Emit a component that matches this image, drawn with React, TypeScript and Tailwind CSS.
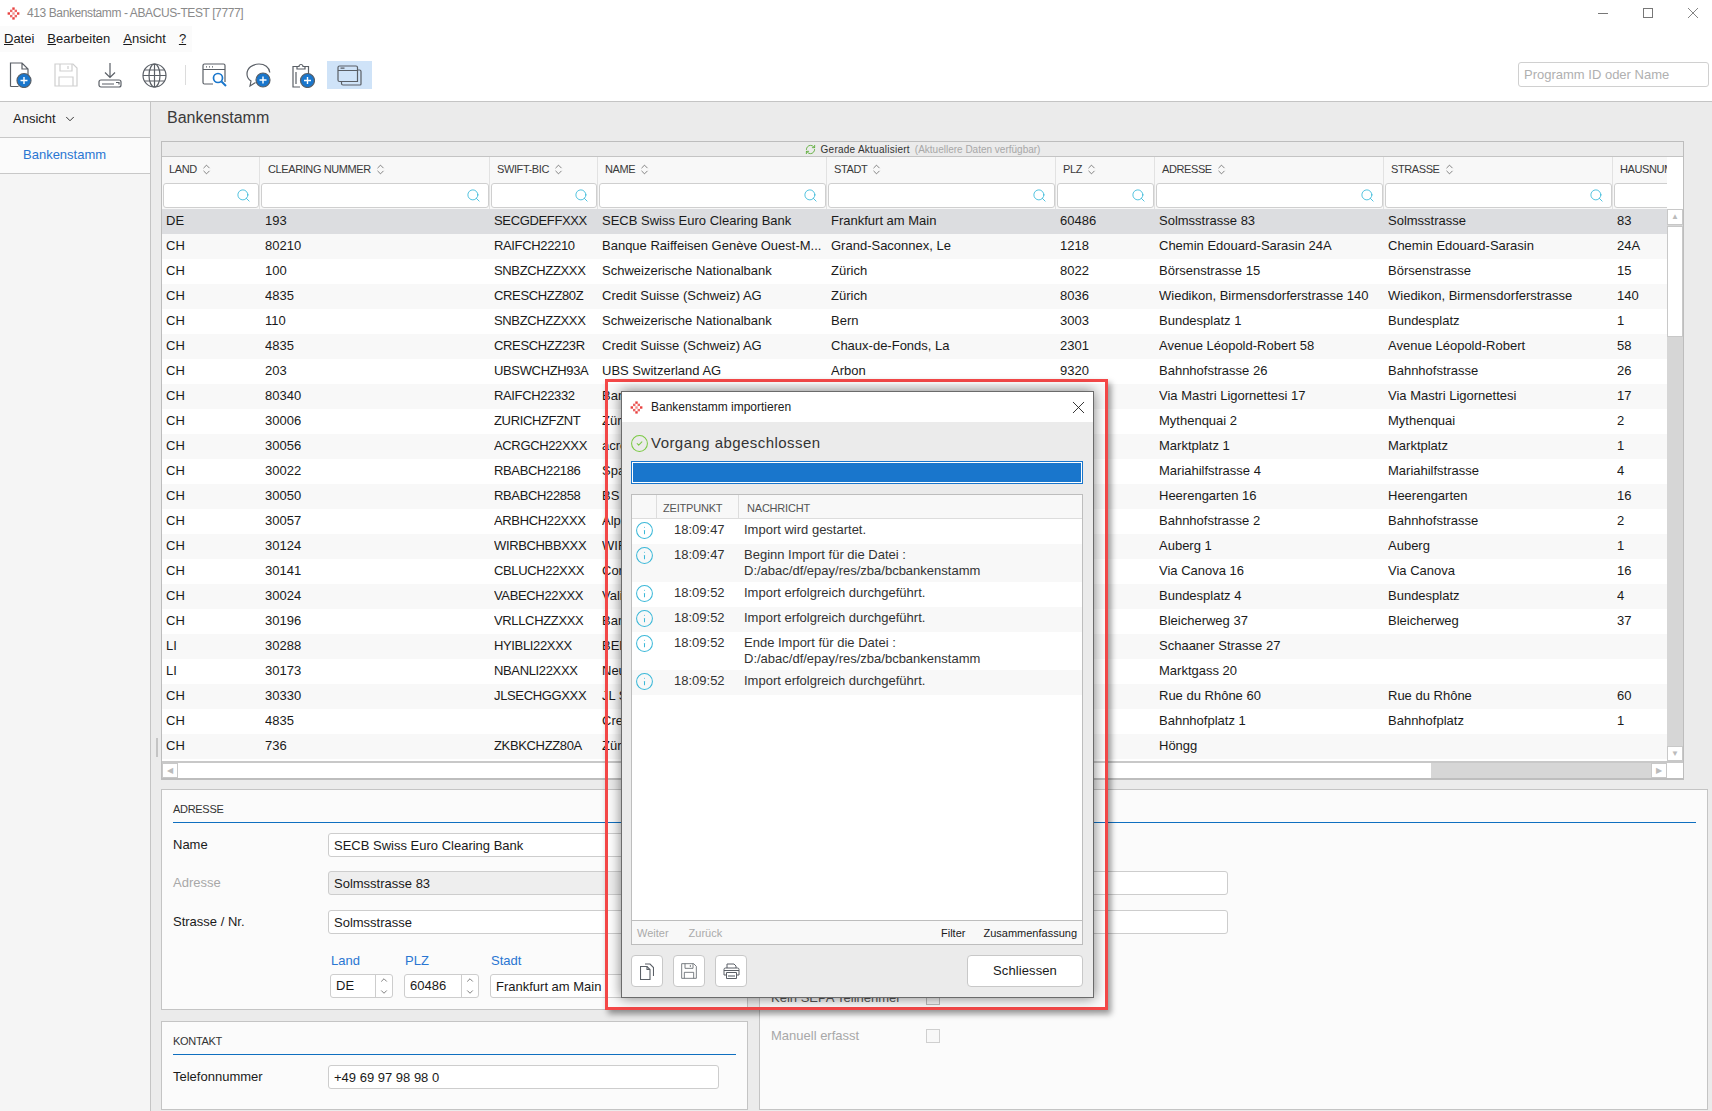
import type { ReactNode } from "react";
import {
  CircleCheck,
  ChevronDown,
  ChevronUp,
  ChevronsUpDown,
  Info,
  RefreshCw,
  Search,
  X,
} from "lucide-react";

// land, clearing, swift, name, stadt, plz, adresse, strasse, nr
const banks = [
  ["DE", "193", "SECGDEFFXXX", "SECB Swiss Euro Clearing Bank", "Frankfurt am Main", "60486", "Solmsstrasse 83", "Solmsstrasse", "83"],
  ["CH", "80210", "RAIFCH22210", "Banque Raiffeisen Genève Ouest-M...", "Grand-Saconnex, Le", "1218", "Chemin Edouard-Sarasin 24A", "Chemin Edouard-Sarasin", "24A"],
  ["CH", "100", "SNBZCHZZXXX", "Schweizerische Nationalbank", "Zürich", "8022", "Börsenstrasse 15", "Börsenstrasse", "15"],
  ["CH", "4835", "CRESCHZZ80Z", "Credit Suisse (Schweiz) AG", "Zürich", "8036", "Wiedikon, Birmensdorferstrasse 140", "Wiedikon, Birmensdorferstrasse", "140"],
  ["CH", "110", "SNBZCHZZXXX", "Schweizerische Nationalbank", "Bern", "3003", "Bundesplatz 1", "Bundesplatz", "1"],
  ["CH", "4835", "CRESCHZZ23R", "Credit Suisse (Schweiz) AG", "Chaux-de-Fonds, La", "2301", "Avenue Léopold-Robert 58", "Avenue Léopold-Robert", "58"],
  ["CH", "203", "UBSWCHZH93A", "UBS Switzerland AG", "Arbon", "9320", "Bahnhofstrasse 26", "Bahnhofstrasse", "26"],
  ["CH", "80340", "RAIFCH22332", "Banca Raiffeisen del Monte San Giorgio", "Ligornetto", "6853", "Via Mastri Ligornettesi 17", "Via Mastri Ligornettesi", "17"],
  ["CH", "30006", "ZURICHZFZNT", "Zürcher Kantonalbank", "", "", "Mythenquai 2", "Mythenquai", "2"],
  ["CH", "30056", "ACRGCH22XXX", "acrevis Bank AG", "", "", "Marktplatz 1", "Marktplatz", "1"],
  ["CH", "30022", "RBABCH22186", "Sparkasse", "", "", "Mariahilfstrasse 4", "Mariahilfstrasse", "4"],
  ["CH", "30050", "RBABCH22858", "BS Bank", "", "", "Heerengarten 16", "Heerengarten", "16"],
  ["CH", "30057", "ARBHCH22XXX", "Alpha Rheintal Bank", "", "", "Bahnhofstrasse 2", "Bahnhofstrasse", "2"],
  ["CH", "30124", "WIRBCHBBXXX", "WIR Bank", "", "", "Auberg 1", "Auberg", "1"],
  ["CH", "30141", "CBLUCH22XXX", "Cornèr Bank", "", "", "Via Canova 16", "Via Canova", "16"],
  ["CH", "30024", "VABECH22XXX", "Valiant Bank", "", "", "Bundesplatz 4", "Bundesplatz", "4"],
  ["CH", "30196", "VRLLCHZZXXX", "Bank Vontobel", "", "", "Bleicherweg 37", "Bleicherweg", "37"],
  ["LI", "30288", "HYIBLI22XXX", "BENDURA", "", "", "Schaaner Strasse 27", "", ""],
  ["LI", "30173", "NBANLI22XXX", "Neue Bank", "", "", "Marktgass 20", "", ""],
  ["CH", "30330", "JLSECHGGXXX", "JL Securities", "", "", "Rue du Rhône 60", "Rue du Rhône", "60"],
  ["CH", "4835", "", "Credit Suisse", "", "", "Bahnhofplatz 1", "Bahnhofplatz", "1"],
  ["CH", "736", "ZKBKCHZZ80A", "Zürcher Kantonalbank", "", "", "Höngg", "", ""],
];

const columns = [
  { label: "LAND", w: "w-[98px]" },
  { label: "CLEARING NUMMER", w: "w-[230px]" },
  { label: "SWIFT-BIC", w: "w-[108px]" },
  { label: "NAME", w: "w-[229px]" },
  { label: "STADT", w: "w-[229px]" },
  { label: "PLZ", w: "w-[99px]" },
  { label: "ADRESSE", w: "w-[229px]" },
  { label: "STRASSE", w: "w-[229px]" },
  { label: "HAUSNUMMER", w: "w-[90px]" },
];

const logRows = [
  { time: "18:09:47", text: ["Import wird gestartet."] },
  { time: "18:09:47", text: ["Beginn Import für die Datei :", "D:/abac/df/epay/res/zba/bcbankenstamm"] },
  { time: "18:09:52", text: ["Import erfolgreich durchgeführt."] },
  { time: "18:09:52", text: ["Import erfolgreich durchgeführt."] },
  { time: "18:09:52", text: ["Ende Import für die Datei :", "D:/abac/df/epay/res/zba/bcbankenstamm"] },
  { time: "18:09:52", text: ["Import erfolgreich durchgeführt."] },
];

function Logo() {
  return (
    <svg width="13" height="13" viewBox="0 0 13 13" fill="#e8413f">
      <rect x="5.3" y="0.4" width="2.4" height="2.4" />
      <rect x="3" y="2.7" width="2.4" height="2.4" opacity="0.8" />
      <rect x="7.6" y="2.7" width="2.4" height="2.4" opacity="0.8" />
      <rect x="0.6" y="5.3" width="2.4" height="2.4" />
      <rect x="10" y="5.3" width="2.4" height="2.4" />
      <rect x="5.3" y="5.3" width="2.4" height="2.4" opacity="0.6" />
      <rect x="3" y="7.9" width="2.4" height="2.4" opacity="0.8" />
      <rect x="7.6" y="7.9" width="2.4" height="2.4" opacity="0.8" />
      <rect x="5.3" y="10.2" width="2.4" height="2.4" />
    </svg>
  );
}

function PlusBadge({ cx, cy }: { cx: number; cy: number }) {
  return (
    <g>
      <circle cx={cx} cy={cy} r="7" fill="#1976cc" />
      <path d={`M${cx - 3.5} ${cy}h7M${cx} ${cy - 3.5}v7`} stroke="#fff" strokeWidth="1.4" fill="none" />
    </g>
  );
}

function DocPlusIcon() {
  return (
    <svg width="24" height="26" viewBox="0 0 24 26" fill="none" stroke="#5a5f66" strokeWidth="1.2">
      <path d="M1.5 24.5V1h11.5l6 6v10M13 1v6h6M1.5 24.5h8" />
      <PlusBadge cx={15} cy={18.5} />
    </svg>
  );
}

function SaveIcon({ color, size = 24 }: { color: string; size?: number }) {
  return (
    <svg width={size} height={size} viewBox="0 0 24 24" fill="none" stroke={color} strokeWidth="1.2">
      <path d="M1 1h18l4 4v18H1z" />
      <path d="M6 1v7h12V1M14 3v3M5 23v-9h14v9" />
    </svg>
  );
}

function DownloadIcon() {
  return (
    <svg width="24" height="26" viewBox="0 0 24 26" fill="none" stroke="#5a5f66" strokeWidth="1.2">
      <path d="M12 1v14M7 10.5l5 5 5-5" />
      <path d="M3 18h18a2 2 0 0 1 2 2v3a2 2 0 0 1-2 2H3a2 2 0 0 1-2-2v-3a2 2 0 0 1 2-2z" />
      <path d="M4 22h12M18 20.5h3v2" />
    </svg>
  );
}

function GlobeIcon() {
  return (
    <svg width="25" height="25" viewBox="0 0 25 25" fill="none" stroke="#5a5f66" strokeWidth="1.2">
      <circle cx="12.5" cy="12.5" r="11.5" />
      <ellipse cx="12.5" cy="12.5" rx="5.5" ry="11.5" />
      <path d="M12.5 1v23M1 12.5h23M2.6 7h19.8M2.6 18h19.8" />
    </svg>
  );
}

function WindowSearchIcon() {
  return (
    <svg width="25" height="25" viewBox="0 0 25 25" fill="none" stroke="#5a5f66" strokeWidth="1.2">
      <path d="M11 21H2.5A1.5 1.5 0 0 1 1 19.5v-17A1.5 1.5 0 0 1 2.5 1h19A1.5 1.5 0 0 1 23 2.5V19" />
      <path d="M1 6.5h22M4 3.8h1M7 3.8h1M10 3.8h1" />
      <circle cx="16" cy="15" r="4.5" stroke="#1976cc" strokeWidth="1.7" />
      <path d="M19.5 18.5l4.5 4.5" stroke="#1976cc" strokeWidth="2" />
    </svg>
  );
}

function ChatPlusIcon() {
  return (
    <svg width="25" height="25" viewBox="0 0 25 25" fill="none" stroke="#5a5f66" strokeWidth="1.2">
      <path d="M13 1C6.4 1 1 5.2 1 11c0 3 1.5 5.4 4 7l-1 5 5.5-3.5" />
      <path d="M13 1c5.7 0 10.2 3.4 10.8 8.5" />
      <PlusBadge cx={17} cy={17} />
    </svg>
  );
}

function ClipboardPlusIcon() {
  return (
    <svg width="23" height="25" viewBox="0 0 23 25" fill="none" stroke="#5a5f66" strokeWidth="1.2">
      <path d="M8 24H1V3.5h4M13 3.5h3.5V11" />
      <path d="M5 6h8V3.5h-2a2 2 0 0 0-4 0H5z" />
      <path d="M4 9v12" />
      <PlusBadge cx={15.5} cy={17.5} />
    </svg>
  );
}

function WindowsIcon() {
  return (
    <svg width="25" height="21" viewBox="0 0 25 21" fill="none" stroke="#5a5f66" strokeWidth="1.2">
      <path d="M20.5 16.5H2.5A1.5 1.5 0 0 1 1 15V2.5A1.5 1.5 0 0 1 2.5 1h16.5a1.5 1.5 0 0 1 1.5 1.5z" />
      <path d="M1 5.5h19.5M3.5 3.2h4" />
      <path d="M20.5 5h2A1.5 1.5 0 0 1 24 6.5v12.5a1 1 0 0 1-1 1H6a1.5 1.5 0 0 1-1.5-1.5v-2" />
    </svg>
  );
}

function CopyIcon() {
  return (
    <svg width="14" height="17" viewBox="0 0 14 17" fill="none" stroke="#5a5f66" strokeWidth="1.1">
      <path d="M5 1h5l3.5 3.5V13" />
      <path d="M.5 3.5H7L10 6.5V16.5H.5z" fill="#fff" />
      <path d="M7 3.5v3h3" />
    </svg>
  );
}

function PrintIcon() {
  return (
    <svg width="17" height="16" viewBox="0 0 17 16" fill="none" stroke="#5a5f66" strokeWidth="1">
      <path d="M4 5V1h7l2 2v2" />
      <path d="M3.5 12H1V6.5A1.5 1.5 0 0 1 2.5 5h12A1.5 1.5 0 0 1 16 6.5V12h-2.5" />
      <path d="M1 7.5h15" />
      <path d="M3.5 9.5h10v6h-10z" />
      <path d="M5 12h7v2H5z" fill="#a5a9ae" stroke="none" />
    </svg>
  );
}

function ToolButton({ children }: { children: ReactNode }) {
  return <div className="flex h-[28px] w-[44.5px] shrink-0 items-center justify-center">{children}</div>;
}

function Field({ value, className }: { value?: string; className: string }) {
  return (
    <input
      readOnly
      defaultValue={value}
      className={`h-[24px] rounded-[3px] border border-[#cdcdcd] pl-[5px] text-[13px] text-[#1a1a1a] outline-none ${className}`}
    />
  );
}

function Spin({ value, className }: { value: string; className: string }) {
  return (
    <div className={`flex h-[24px] rounded-[3px] border border-[#cdcdcd] bg-white text-[13px] text-[#1a1a1a] ${className}`}>
      <div className="flex flex-1 items-center pl-[5px]">{value}</div>
      <div className="flex w-[17px] flex-col items-center justify-center gap-[2px] border-l border-[#cdcdcd] text-[#666]">
        <ChevronUp size={10} />
        <ChevronDown size={10} />
      </div>
    </div>
  );
}

function CardTitle({ title }: { title?: string }) {
  return (
    <div className="flex h-[33px] items-center border-b border-[#0f6fc0] pt-[6px] text-[11px] tracking-[-0.3px] text-[#333]">
      {title}
    </div>
  );
}

function Sort() {
  return <ChevronsUpDown size={13} strokeWidth={1.2} className="ml-[3px] shrink-0 text-[#444]" />;
}

function ScrollBtn({ children, className }: { children: ReactNode; className?: string }) {
  return (
    <div className={`flex items-center justify-center border border-[#c8c8c8] bg-white text-[8px] text-[#bbb] ${className ?? ""}`}>
      {children}
    </div>
  );
}

export default function App() {
  return (
    <div className="relative flex h-screen w-full flex-col overflow-hidden bg-white font-['Liberation_Sans',sans-serif] text-[13px] text-[#1a1a1a]">
      {/* title bar */}
      <div className="flex h-[26px] items-center pr-[14px] pl-[7px]">
        <Logo />
        <span className="ml-[7px] text-[12px] tracking-[-0.4px] text-[#8a8a8a]">413 Bankenstamm - ABACUS-TEST [7777]</span>
        <div className="ml-auto flex items-center gap-[35px]">
          <div className="h-px w-[10px] bg-[#777]" />
          <div className="h-[10px] w-[10px] border border-[#777]" />
          <svg width="10" height="10" viewBox="0 0 10 10" stroke="#777" strokeWidth="0.9">
            <path d="M0 0l10 10M10 0L0 10" />
          </svg>
        </div>
      </div>

      {/* menu */}
      <div className="flex h-[26px] w-[192px] items-center gap-[13px] bg-[#fbfbfb] pl-[4px]">
        <span><u>D</u>atei</span>
        <span><u>B</u>earbeiten</span>
        <span><u>A</u>nsicht</span>
        <span><u>?</u></span>
      </div>

      {/* toolbar */}
      <div className="-ml-[1px] flex h-[49px] items-start pt-[9px] pr-[3px]">
        <ToolButton><DocPlusIcon /></ToolButton>
        <ToolButton><SaveIcon color="#cfcfcf" /></ToolButton>
        <ToolButton><DownloadIcon /></ToolButton>
        <ToolButton><GlobeIcon /></ToolButton>
        <div className="mt-[4px] ml-[8px] h-[20px] w-px bg-[#dcdcdc]" />
        <div className="ml-[6px] flex">
          <ToolButton><WindowSearchIcon /></ToolButton>
          <ToolButton><ChatPlusIcon /></ToolButton>
          <ToolButton><ClipboardPlusIcon /></ToolButton>
        </div>
        <div className="ml-[1.5px] flex h-[28px] w-[45px] items-center justify-center bg-[#cfe3f8]">
          <WindowsIcon />
        </div>
        <input
          readOnly
          placeholder="Programm ID oder Name"
          className="mt-[1px] ml-auto h-[25px] w-[191px] rounded-[3px] border border-[#d0d0d0] pl-[5px] text-[13px] outline-none placeholder:text-[#b0b0b0]"
        />
      </div>

      <div className="relative flex flex-1 border-t border-[#c4c4c4] bg-[#ebebeb]">
        {/* sidebar */}
        <div className="flex w-[151px] shrink-0 flex-col border-r border-[#c4c4c4] bg-[#f5f5f5]">
          <div className="flex h-[36px] items-center gap-[7px] border-b border-[#c8c8c8] pb-[1px] pl-[13px]">
            Ansicht
            <ChevronDown size={14} strokeWidth={1.5} />
          </div>
          <div className="flex h-[36px] items-center border-b border-[#c8c8c8] bg-[#fbfbfb] pb-[1px] pl-[23px] text-[#2a76d2]">
            Bankenstamm
          </div>
        </div>

        {/* splitter grip */}
        <div className="absolute top-[636px] left-[156px] h-[19px] w-[2px] bg-[#c4c4c4]" />

        <div className="flex flex-1 flex-col pr-[4px] pl-[10px]">
          <div className="flex h-[30px] items-center pt-[2px] pl-[6px] text-[16px] text-[#3a3a3a]">Bankenstamm</div>

          {/* table */}
          <div className="mt-[9px] mr-[24px] flex h-[639px] flex-col border border-b-2 border-[#bdbdbd] bg-white">
            <div className="flex h-[15px] items-center justify-center gap-[5px] border-b border-[#c4c4c4] bg-[#ebebeb] text-[10px]">
              <RefreshCw size={11} strokeWidth={2} className="text-[#5fae3c]" />
              <span className="tracking-[0.25px] text-[#333]">Gerade Aktualisiert</span>
              <span className="text-[#a8a8a8]">(Aktuellere Daten verfügbar)</span>
            </div>

            <div className="flex h-[605px]">
              <div className="flex w-[1505px] flex-col overflow-hidden">
                <div className="flex h-[52px] shrink-0 bg-[#f8f8f8]">
                  {columns.map((c, i) => (
                    <div key={c.label} className={`flex shrink-0 flex-col ${c.w} ${i < 8 ? "border-r border-[#e2e2e2]" : ""}`}>
                      <div className={`flex h-[24px] items-center overflow-hidden pt-[1px] text-[11px] tracking-[-0.4px] whitespace-nowrap text-[#3a3a3a] ${i === 1 ? "pl-[8px]" : "pl-[7px]"}`}>
                        {c.label}
                        {i < 8 && <Sort />}
                      </div>
                      <div className="mt-[2px] ml-[1px] flex h-[24.5px] items-center justify-end rounded-[3px] border border-[#cfcfcf] bg-white pr-[7px] text-[#2bb5d8]">
                        {i < 8 && <Search size={15} strokeWidth={1.3} />}
                      </div>
                    </div>
                  ))}
                </div>

                {banks.map((r, i) => (
                  <div
                    key={i}
                    className={`grid h-[25px] shrink-0 grid-cols-[99px_229px_108px_229px_229px_99px_229px_229px_50px] items-center pb-[2px] pl-[4px] whitespace-nowrap ${
                      i === 0 ? "bg-[#dcdde0]" : i % 2 === 1 ? "bg-[#f8f8f8]" : "bg-white"
                    }`}
                  >
                    {r.map((v, j) => (
                      <div key={j} className={`overflow-hidden ${j === 2 ? "tracking-[-0.35px]" : ""}`}>{v}</div>
                    ))}
                  </div>
                ))}
              </div>

              {/* vertical scrollbar */}
              <div className="flex w-[16px] flex-col">
                <div className="h-[52px] bg-white" />
                <div className="flex flex-1 flex-col bg-[#d6d6d6]">
                  <ScrollBtn className="h-[16px]">▲</ScrollBtn>
                  <div className="mt-[1px] h-[111px] border border-[#c8c8c8] bg-white" />
                  <ScrollBtn className="mt-auto h-[15px]">▼</ScrollBtn>
                </div>
              </div>
            </div>

            {/* horizontal scrollbar */}
            <div className="flex h-[17px] border-t-2 border-[#c8c8c8]">
              <ScrollBtn className="w-[16px]">◀</ScrollBtn>
              <div className="w-[1253px] bg-white" />
              <div className="w-[220px] bg-[#d6d6d6]" />
              <ScrollBtn className="w-[16px]">▶</ScrollBtn>
              <div className="flex-1 bg-white" />
            </div>
          </div>

          {/* detail panels */}
          <div className="mt-[9px] flex h-[321px] gap-[11px]">
            <div className="flex w-[587px] shrink-0 flex-col gap-[11px]">
              <div className="h-[221px] border border-[#c4c4c4] bg-[#fbfbfb] px-[11px]">
                <CardTitle title="ADRESSE" />
                <div className="mt-[10px] flex items-center">
                  <span className="w-[155px]">Name</span>
                  <Field value="SECB Swiss Euro Clearing Bank" className="flex-1 bg-white" />
                </div>
                <div className="mt-[14px] flex items-center">
                  <span className="w-[155px] text-[#a8a8a8]">Adresse</span>
                  <Field value="Solmsstrasse 83" className="flex-1 bg-[#eeeeee]" />
                </div>
                <div className="mt-[15px] flex items-center">
                  <span className="w-[155px]">Strasse / Nr.</span>
                  <Field value="Solmsstrasse" className="flex-1 bg-white" />
                </div>
                <div className="mt-[19px] ml-[157px] flex gap-[11px]">
                  <div className="flex flex-col">
                    <span className="h-[16px] pl-[1px] leading-[16px] text-[#2a76d2]">Land</span>
                    <Spin value="DE" className="mt-[5px] w-[63px]" />
                  </div>
                  <div className="flex flex-col">
                    <span className="h-[16px] pl-[1px] leading-[16px] text-[#2a76d2]">PLZ</span>
                    <Spin value="60486" className="mt-[5px] w-[75px]" />
                  </div>
                  <div className="flex flex-1 flex-col">
                    <span className="h-[16px] pl-[1px] leading-[16px] text-[#2a76d2]">Stadt</span>
                    <Field value="Frankfurt am Main" className="mt-[5px] w-full bg-white" />
                  </div>
                </div>
              </div>

              <div className="h-[89px] border border-[#c4c4c4] bg-[#fbfbfb] px-[11px]">
                <CardTitle title="KONTAKT" />
                <div className="mt-[10px] flex items-center">
                  <span className="w-[155px]">Telefonnummer</span>
                  <Field value="+49 69 97 98 98 0" className="w-[391px] bg-white" />
                </div>
              </div>
            </div>

            <div className="flex-1 border border-[#c4c4c4] bg-[#fbfbfb] px-[11px]">
              <CardTitle />
              <div className="mt-[48px] ml-[155px]">
                <Field className="block w-[302px] bg-white" />
              </div>
              <div className="mt-[15px] ml-[155px]">
                <Field className="block w-[302px] bg-white" />
              </div>
              <div className="mt-[57px] flex h-[14px] items-center text-[#555]">
                <span className="w-[155px]">Kein SEPA Teilnehmer</span>
                <span className="h-[14px] w-[14px] border border-[#bbb] bg-[#f5f5f5]" />
              </div>
              <div className="mt-[24px] flex h-[14px] items-center text-[#a8a8a8]">
                <span className="w-[155px]">Manuell erfasst</span>
                <span className="h-[14px] w-[14px] border border-[#cfcfcf] bg-[#f8f8f8]" />
              </div>
            </div>
          </div>
        </div>
      </div>

      {/* red annotation frame */}
      <div className="absolute top-[379px] left-[605px] h-[631px] w-[503px] border-[3px] border-[#f44848] shadow-[3px_4px_6px_rgba(0,0,0,0.4)]" />

      {/* dialog */}
      <div className="absolute top-[391px] left-[621px] flex h-[607px] w-[473px] flex-col border border-[#6b6b6b] bg-[#ebebeb] shadow-[0_0_12px_rgba(0,0,0,0.5)]">
        <div className="flex h-[30px] items-center bg-white pr-[4.5px] pl-[8px]">
          <Logo />
          <span className="ml-[8px] text-[12px]">Bankenstamm importieren</span>
          <X size={21} strokeWidth={1} className="ml-auto" />
        </div>

        <div className="flex flex-1 flex-col pr-[10px] pb-[9px] pl-[9px]">
          <div className="flex h-[39px] items-center gap-[2.5px] pt-[3px] text-[#333]">
            <CircleCheck size={19} strokeWidth={1.3} className="-ml-[1.5px] text-[#7ac943]" />
            <span className="text-[15px] tracking-[0.45px]">Vorgang abgeschlossen</span>
          </div>

          <div className="h-[23px] border border-[#1976cc] bg-white p-[1px]">
            <div className="h-full bg-[#1976cc]" />
          </div>

          <div className="mt-[10px] flex h-[451px] flex-col border border-[#bdbdbd] bg-white">
            <div className="flex h-[24px] shrink-0 items-center border-b border-[#dddddd] bg-[#f8f8f8] text-[11px] tracking-[-0.2px] text-[#555]">
              <div className="h-full w-[25px] border-r border-[#dddddd]" />
              <div className="flex h-full w-[82px] items-center border-r border-[#dddddd] pt-[4px] pl-[6px]">ZEITPUNKT</div>
              <div className="pt-[4px] pl-[8px]">NACHRICHT</div>
            </div>

            <div className="flex-1">
              {logRows.map((r, i) => (
                <div key={i} className={`flex min-h-[25px] pt-[3px] pb-[3px] leading-[16px] text-[#333] ${i % 2 === 1 ? "bg-[#f8f8f8]" : "bg-white"}`}>
                  <div className="w-[25px] pl-[2.5px]">
                    <Info size={19} strokeWidth={1.3} className="-mt-[1px] text-[#3bb8d8]" />
                  </div>
                  <div className="w-[87px] pl-[17px]">{r.time}</div>
                  <div>
                    {r.text.map((t) => (
                      <div key={t}>{t}</div>
                    ))}
                  </div>
                </div>
              ))}
            </div>

            <div className="flex h-[24px] shrink-0 items-center border-t border-[#bdbdbd] bg-[#f8f8f8] px-[5px] pt-[1px] text-[11px]">
              <span className="text-[#aaaaaa]">Weiter</span>
              <span className="ml-[20px] text-[#aaaaaa]">Zurück</span>
              <span className="ml-auto">Filter</span>
              <span className="ml-[18px]">Zusammenfassung</span>
            </div>
          </div>

          <div className="mt-[10px] flex gap-[10px]">
            <div className="flex h-[32px] w-[32px] items-center justify-center rounded-[4px] border border-[#c8c8c8] bg-white"><CopyIcon /></div>
            <div className="flex h-[32px] w-[32px] items-center justify-center rounded-[4px] border border-[#c8c8c8] bg-white"><SaveIcon color="#5a5f66" size={16} /></div>
            <div className="flex h-[32px] w-[32px] items-center justify-center rounded-[4px] border border-[#c8c8c8] bg-white"><PrintIcon /></div>
            <div className="ml-auto flex h-[32px] w-[116px] items-center justify-center rounded-[4px] border border-[#c8c8c8] bg-white tracking-[0.1px]">
              Schliessen
            </div>
          </div>
        </div>
      </div>
    </div>
  );
}
